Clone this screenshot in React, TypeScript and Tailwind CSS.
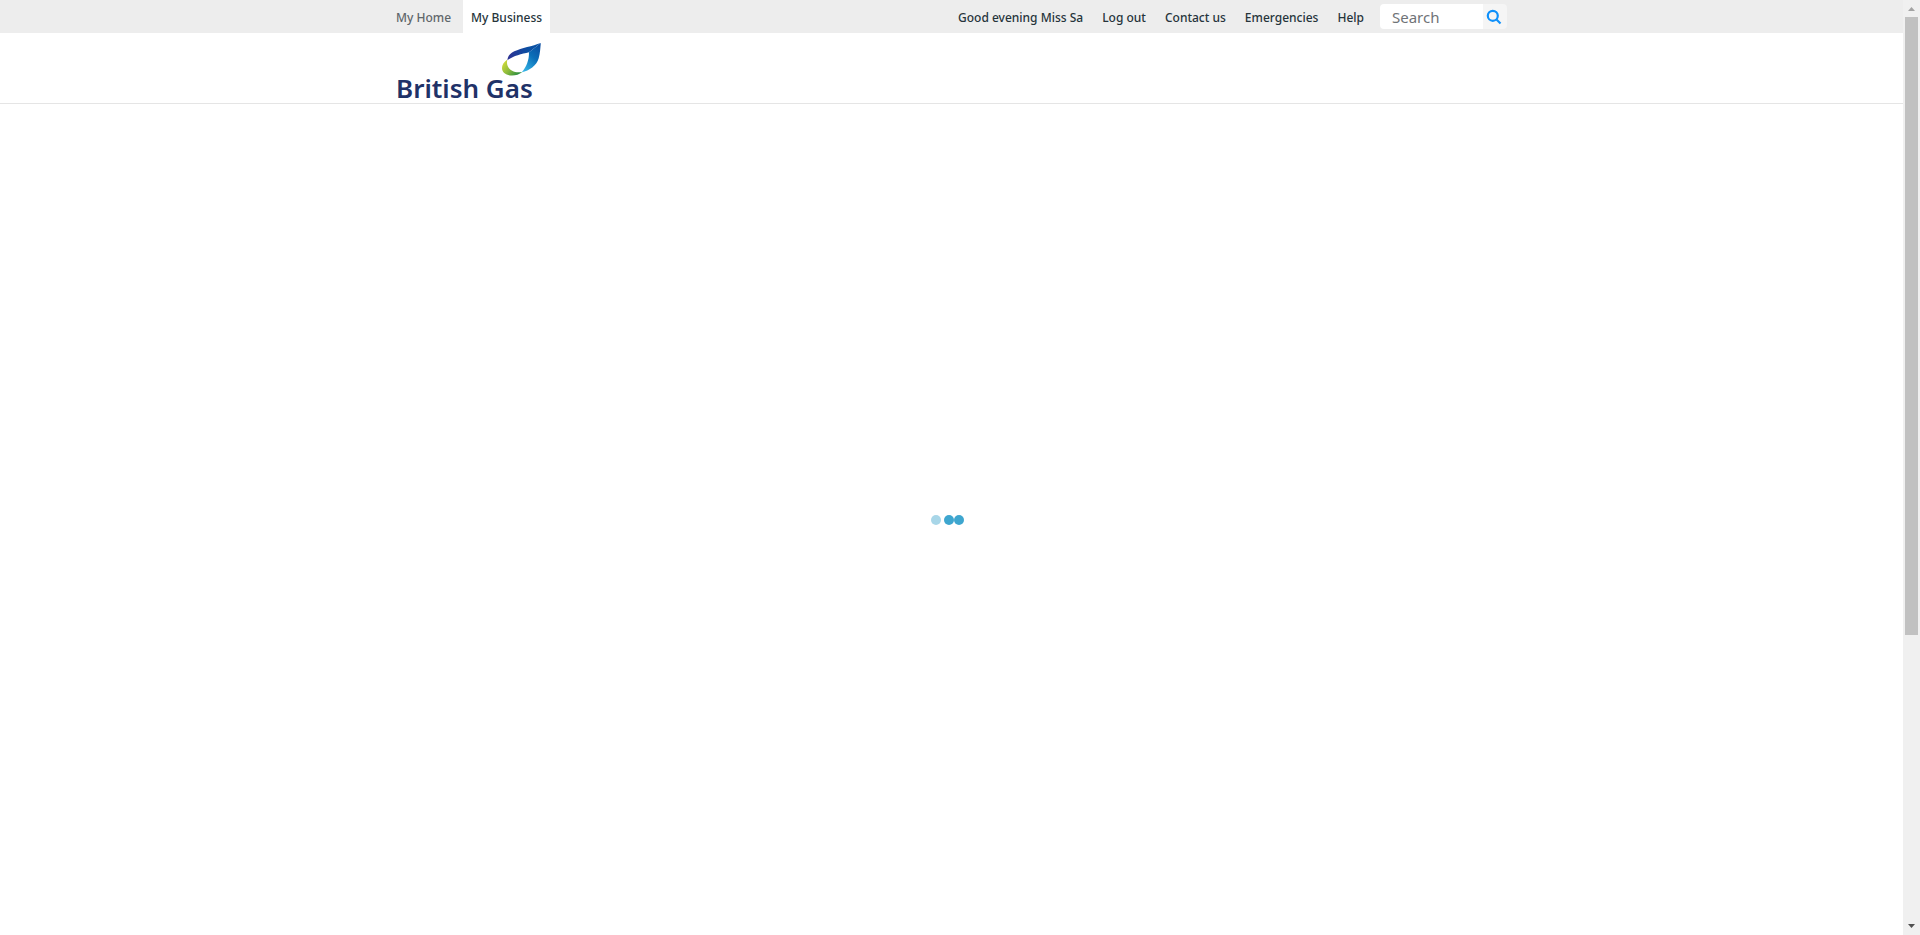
const links = ['Good evening Miss Sa', 'Log out', 'Contact us', 'Emergencies', 'Help'];

function Logo() {
  return (
    <a href="#" aria-label="British Gas" className="flex w-[146px] flex-col items-start">
      <svg aria-hidden="true" viewBox="502 42 41 35" className="h-[35px] w-[41px] self-end">
        <defs>
          <linearGradient id="top" x1="0" x2="1">
            <stop offset="0" stopColor="#2e3192" />
            <stop offset="0.6" stopColor="#0b4ea2" />
            <stop offset="1" stopColor="#0b55a5" />
          </linearGradient>
          <linearGradient id="side" x1="0.8" y1="0" x2="0.2" y2="1">
            <stop offset="0" stopColor="#0b4ea2" />
            <stop offset="0.45" stopColor="#0b6fb8" />
            <stop offset="1" stopColor="#35b4e5" />
          </linearGradient>
          <linearGradient id="leaf" x1="0" y1="0.2" x2="1" y2="0.9">
            <stop offset="0" stopColor="#d4dc3a" />
            <stop offset="0.45" stopColor="#8dbb3c" />
            <stop offset="1" stopColor="#118240" />
          </linearGradient>
        </defs>
        <path fill="url(#leaf)" d="M508.4 59.4C504.8 61.8 503 64.6 503 68C503 72.6 507.2 75.5 513 75.5C516.8 75.5 520.4 74.2 523.3 71.9C515.5 73.4 509.3 69.8 508.2 64.5C507.8 62.5 508 60.8 508.4 59.4Z" />
        <path fill="url(#side)" d="M541.8 43L530 52.2C530.2 59.8 527.4 67.2 522.8 72.2C530.5 70.6 537.4 66 539.7 58.3C541.1 53.5 541.3 48 541.8 43Z" />
        <path fill="url(#top)" d="M541.8 43C533.5 46 522.5 48.2 515.3 51.3C511 53.2 508.5 56.5 508.5 60.2C514 55.8 522.5 54 530 52.2Z" />
      </svg>
      <span className="-mt-1 whitespace-nowrap text-[26px] leading-[30px] font-semibold text-[#1f3268]">British Gas</span>
    </a>
  );
}

export default function App() {
  return (
    <div className="flex h-screen overflow-hidden bg-white font-['Noto_Sans','Open_Sans',sans-serif]">
      <div className="flex min-w-0 flex-1 flex-col">
        <div className="bg-[#ededed]">
          <div className="mx-auto flex h-[33px] max-w-[1111px] items-center text-xs font-medium text-[#26343b]">
            <nav aria-label="Site" className="flex h-full items-stretch gap-3">
              <a href="#" className="flex items-center pt-0.5 text-[#5f666a]">My Home</a>
              <a href="#" aria-current="page" className="flex items-center bg-white px-2 pt-0.5">My Business</a>
            </nav>
            <nav aria-label="Account" className="ml-auto flex gap-[19px] pt-0.5">
              {links.map((label) => (
                <a key={label} href="#" className="whitespace-nowrap">{label}</a>
              ))}
            </nav>
            <form role="search" className="ml-4 flex h-[25px] w-[127px] overflow-hidden rounded">
              <input
                type="search"
                aria-label="Search"
                placeholder="Search"
                className="min-w-0 flex-1 bg-white pl-3 text-[15px] font-normal outline-none placeholder:text-[#6f7377]"
              />
              <button type="button" aria-label="Submit search" className="flex w-6 items-center bg-[#f5f5f5] pl-[3px]">
                <svg viewBox="0 0 16 16" className="size-4 fill-none stroke-[#0f90fa]" strokeWidth="2.2">
                  <circle cx="6.8" cy="6.8" r="5" />
                  <path d="M10.5 10.5L14.5 14.5" />
                </svg>
              </button>
            </form>
          </div>
        </div>
        <header className="border-b border-[#e5e5e5]">
          <div className="mx-auto max-w-[1111px] pt-[9px]">
            <Logo />
          </div>
        </header>
        <main className="flex flex-1 items-center justify-center pr-2">
          <div role="status" aria-label="Loading" className="flex">
            <span className="mr-[3px] size-2.5 rounded-full bg-[#a8d6e8]" />
            <span className="size-2.5 rounded-full bg-[#3ea6cf]" />
            <span className="size-2.5 rounded-full bg-[#3ea6cf]" />
          </div>
        </main>
      </div>
      <div aria-hidden="true" className="flex w-[17px] shrink-0 flex-col items-center bg-[#f0f0f0]">
        <svg viewBox="0 0 17 17" className="size-[17px] shrink-0 fill-[#a3a3a3]">
          <path d="M5 11L8.5 7L12 11Z" />
        </svg>
        <div className="flex w-full flex-1 flex-col px-0.5">
          <div className="grow-[618] bg-[#c1c1c1]" />
          <div className="grow-[283]" />
        </div>
        <svg viewBox="0 0 17 17" className="size-[17px] shrink-0 fill-[#505050]">
          <path d="M5 6L8.5 10L12 6Z" />
        </svg>
      </div>
    </div>
  );
}
